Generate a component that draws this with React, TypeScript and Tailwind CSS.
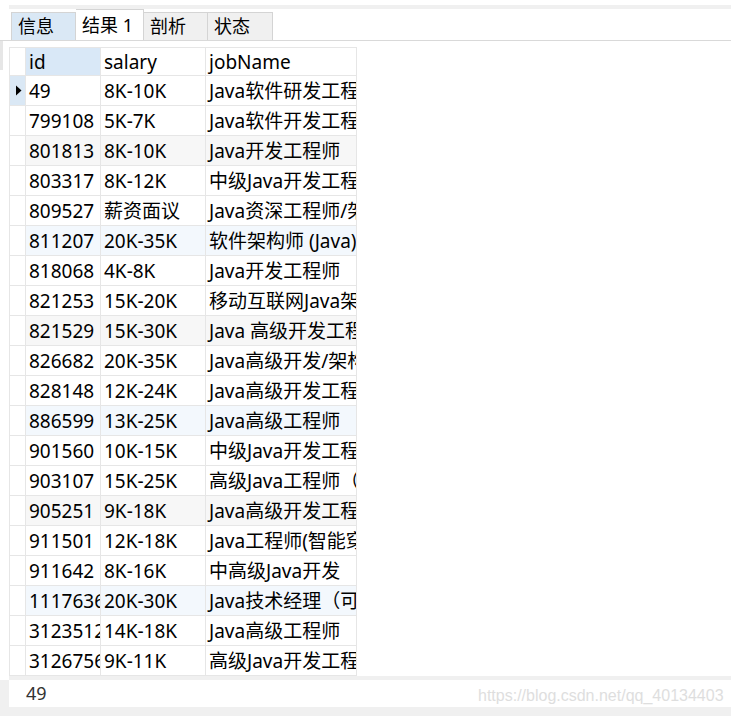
import React from 'react';

const rows: [string, string, string][] = [
  ['49', '8K-10K', 'Java软件研发工程师'],
  ['799108', '5K-7K', 'Java软件开发工程师'],
  ['801813', '8K-10K', 'Java开发工程师'],
  ['803317', '8K-12K', '中级Java开发工程师'],
  ['809527', '薪资面议', 'Java资深工程师/架构师'],
  ['811207', '20K-35K', '软件架构师 (Java)'],
  ['818068', '4K-8K', 'Java开发工程师'],
  ['821253', '15K-20K', '移动互联网Java架构师'],
  ['821529', '15K-30K', 'Java 高级开发工程师'],
  ['826682', '20K-35K', 'Java高级开发/架构师'],
  ['828148', '12K-24K', 'Java高级开发工程师'],
  ['886599', '13K-25K', 'Java高级工程师'],
  ['901560', '10K-15K', '中级Java开发工程师'],
  ['903107', '15K-25K', '高级Java工程师（大数据）'],
  ['905251', '9K-18K', 'Java高级开发工程师'],
  ['911501', '12K-18K', 'Java工程师(智能穿戴)'],
  ['911642', '8K-16K', '中高级Java开发'],
  ['1117636', '20K-30K', 'Java技术经理（可分享）'],
  ['3123512', '14K-18K', 'Java高级工程师'],
  ['3126756', '9K-11K', '高级Java开发工程师'],
];

const rowBg = (i: number) => {
  if (i % 3 !== 2) return 'bg-white';
  return Math.floor(i / 3) % 2 === 0 ? 'bg-[#f7f7f7]' : 'bg-[#f3f8fd]';
};

const cell = 'h-[30px] flex items-center pl-[3px] pt-[1px] overflow-hidden whitespace-nowrap border-r border-b border-[#e6e6e6]';

export default function App() {
  return (
    <div className="relative w-[731px] h-[716px] bg-white overflow-hidden text-black font-['Noto_Sans','Noto_Sans_CJK_SC',sans-serif]">
      <div className="h-[5px]" />
      <div className="ml-[9px] h-[4px] bg-[#f0f0f0]" />

      {/* tabs */}
      <div className="h-[32px] flex items-end pl-[11px] border-b border-[#d9d9d9] text-[18px]">
        <div className="w-[65px] h-[28px] pl-[6px] flex items-center bg-[#dae8f5] border border-b-0 border-[#d4d4d4]">信息</div>
        <div className="w-[68px] h-[31px] pl-[6px] flex items-center bg-white border-t border-r border-[#d4d4d4]">结果 1</div>
        <div className="w-[64px] h-[28px] pl-[6px] flex items-center bg-[#f0f0f0] border-t border-r border-[#d4d4d4]">剖析</div>
        <div className="w-[65px] h-[28px] pl-[6px] flex items-center bg-[#f0f0f0] border-t border-r border-[#d4d4d4]">状态</div>
      </div>

      {/* grid */}
      <div className="flex h-[635px]">
        <div className="w-[9px] shrink-0">
          <div className="w-[3px] h-[29px] bg-[#e6e6e6]" />
        </div>
        <div className="pt-[6px]">
          <div className="grid grid-cols-[16px_75px_105px_151px] border-l border-t border-[#e6e6e6] text-[19px] leading-none">
            <div className="h-[28px] border-r border-b border-[#e6e6e6]" />
            <div className="h-[28px] flex items-center pl-[3px] pt-[1px] bg-[#d9e8f7] border-r border-b border-[#e6e6e6]">id</div>
            <div className="h-[28px] flex items-center pl-[3px] pt-[1px] border-r border-b border-[#e6e6e6]">salary</div>
            <div className="h-[28px] flex items-center pl-[3px] pt-[1px] border-r border-b border-[#e6e6e6]">jobName</div>
            {rows.map(([id, salary, job], i) => (
              <React.Fragment key={id}>
                <div className={`h-[30px] flex items-center justify-end pr-[3px] border-r border-b border-[#e6e6e6] ${i === 0 ? 'bg-[#dae8f5]' : 'bg-white'}`}>
                  {i === 0 && (
                    <svg width="7" height="11" viewBox="0 0 7 11">
                      <path d="M1 0.5 L6.5 5.5 L1 10.5 Z" fill="#000" />
                    </svg>
                  )}
                </div>
                <div className={`${cell} ${rowBg(i)}`}>{id}</div>
                <div className={`${cell} ${rowBg(i)}`}>{salary}</div>
                <div className={`${cell} ${rowBg(i)}`}>{job}</div>
              </React.Fragment>
            ))}
          </div>
        </div>
      </div>

      {/* status bar */}
      <div className="h-[4px] ml-[9px] bg-[#f0f0f0]" />
      <div className="flex h-[27px]">
        <div className="w-[9px] bg-[#f0f0f0]" />
        <div className="flex-1 flex items-center pl-[17px] text-[18px] text-[#333]">49</div>
      </div>
      <div className="h-[9px] bg-[#f0f0f0]" />

      <div className="absolute left-[478px] top-[684px] text-[16px] text-[#dedede] font-['Liberation_Sans',sans-serif]">
        https://blog.csdn.net/qq_40134403
      </div>
    </div>
  );
}
